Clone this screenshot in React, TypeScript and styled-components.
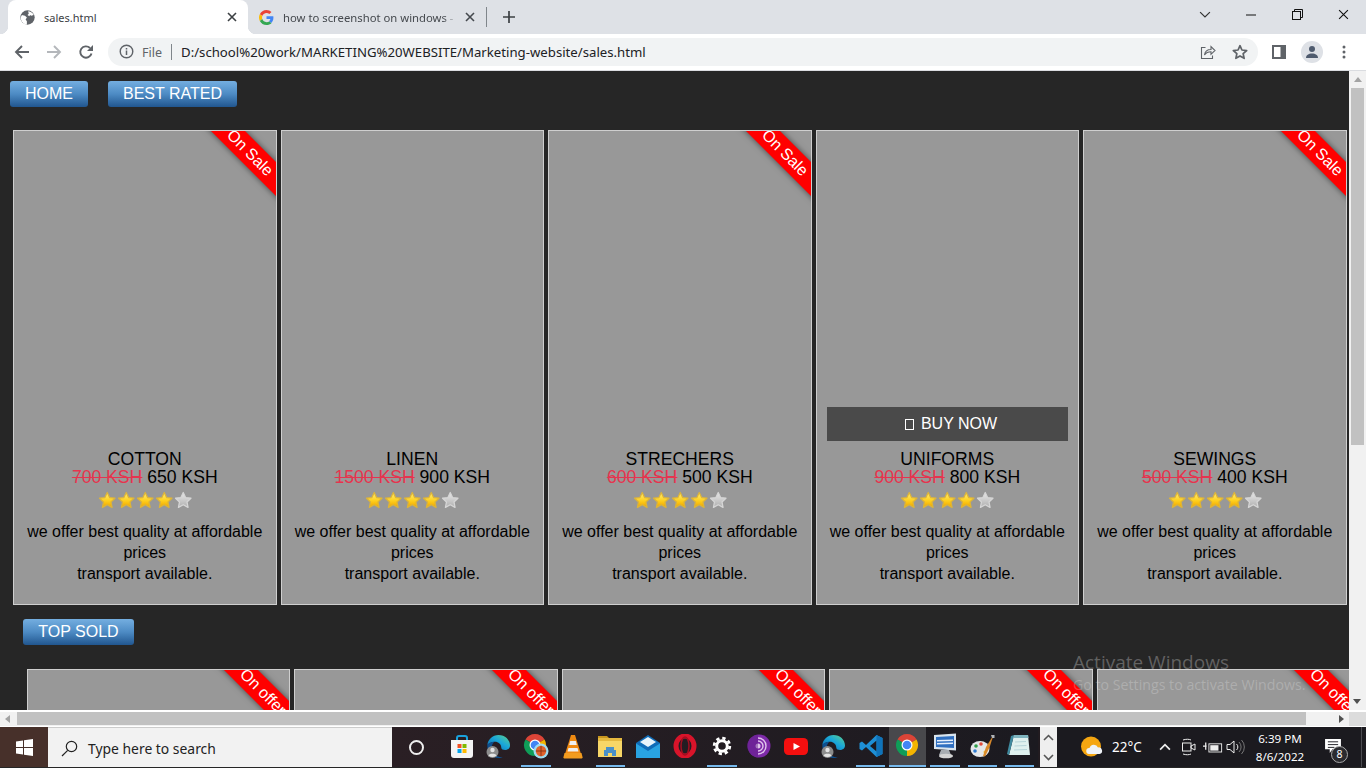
import React from "react";
import styled, { createGlobalStyle } from "styled-components";

const Global = createGlobalStyle`
  html, body { margin: 0; padding: 0; width: 1366px; height: 768px; overflow: hidden; background: #262626; }
  * { box-sizing: border-box; }
`;

const Screen = styled.div`
  width: 1366px; height: 768px; display: flex; flex-direction: column; overflow: hidden; position: relative;
  font-family: "Liberation Sans", Arial, sans-serif;
`;

/* browser chrome */
const UI = `"Noto Sans", "Open Sans", sans-serif`;
const TabStrip = styled.div`
  height: 34px; background: #dee1e6; display: flex; align-items: stretch; padding-left: 8px; flex: none;
`;
const ActiveTab = styled.div`
  position: relative; width: 240px; background: #fff; border-radius: 8px 8px 0 0; display: flex; align-items: center;
  padding: 0 11px 0 12px; font: 11px ${UI}; color: #3c4043;
  &::before, &::after { content: ""; position: absolute; bottom: 0; width: 8px; height: 8px; }
  &::before { left: -8px; background: radial-gradient(circle at 0 0, #dee1e6 8px, #fff 8.5px); }
  &::after { right: -8px; background: radial-gradient(circle at 100% 0, #dee1e6 8px, #fff 8.5px); }
`;
const TabTitle = styled.span`
  flex: 1; margin-left: 9px; white-space: nowrap; overflow: hidden;
`;
const GreyTab = styled.div`
  width: 238px; display: flex; align-items: center; padding: 0 9px 0 11px; font: 11.3px ${UI}; color: #45494e;
`;
const FadedTitle = styled.span`
  width: 174px; margin-left: 9px; margin-right: 8px; white-space: nowrap; overflow: hidden;
  mask-image: linear-gradient(90deg, #000 92%, transparent);
`;
const TabDivider = styled.div`
  width: 1px; height: 20px; background: #80868b; align-self: center;
`;
const NewTab = styled.div`
  width: 44px; display: flex; align-items: center; justify-content: center;
`;
const WindowControls = styled.div`
  margin-left: auto; display: flex; align-items: flex-start;
`;
const WinButton = styled.div`
  width: 46px; height: 29px; display: flex; align-items: center; justify-content: center;
`;
const Toolbar = styled.div`
  height: 37px; background: #fff; display: flex; align-items: center; flex: none; border-bottom: 1px solid #dadce0;
  padding: 0 0 1px 0;
`;
const NavIcon = styled.div`
  width: 32px; display: flex; justify-content: center; align-items: center;
`;
const NavGroup = styled.div`
  display: flex; margin-left: 6px; width: 102px;
`;
const Omnibox = styled.div`
  width: 1150px; height: 28px; border-radius: 14px; background: #f1f3f4; display: flex; align-items: center; padding: 0 2px 0 11px;
`;
const FileLabel = styled.span`
  font: 12.5px ${UI}; color: #5f6368; margin-left: 8px; padding-top: 1px;
`;
const OmniSep = styled.span`
  width: 1px; height: 16px; background: #80868b; margin: 0 9px;
`;
const Url = styled.span`
  font: 13.2px ${UI}; color: #202124; flex: 1; white-space: nowrap;
`;
const OmniAction = styled.div`
  width: 32px; display: flex; justify-content: center; align-items: center;
`;
const ToolRight = styled.div`
  display: flex; align-items: center; margin-left: 5px;
`;
const ToolBtn = styled.div`
  width: 32.5px; display: flex; justify-content: center; align-items: center;
`;
const Avatar = styled.div`
  width: 22px; height: 22px; border-radius: 50%; background: #dee1e6; display: flex; align-items: center; justify-content: center;
`;

/* page */
const Viewport = styled.div`
  flex: none; height: 641px; display: flex; border-bottom: 2px solid #fff;
`;
const Page = styled.div`
  flex: 1; min-width: 0; background: #262626; overflow: hidden; padding-top: 10px;
`;
const NavRow = styled.div`
  display: flex; gap: 20px; padding-left: 10px;
`;
const GlossButton = styled.div<{ $w: number }>`
  width: ${(p) => p.$w}px; height: 26px; border-radius: 3px; color: #fff; font-size: 16px; line-height: 25px; text-align: center;
  white-space: nowrap;
  background: linear-gradient(180deg, #74aee0 0%, #4d8bc4 50%, #21568f 100%);
`;
const SoldRow = styled.div`
  padding-left: 23px; margin-top: 14px;
`;
const CardRow = styled.div<{ $left: number; $top: number }>`
  display: flex; gap: 4px; padding-left: ${(p) => p.$left}px; margin-top: ${(p) => p.$top}px;
`;
const Card = styled.div`
  position: relative; flex: none; width: 263.5px; height: 475px; background: #989898; border: 1px solid #cfcfcf; overflow: hidden;
  text-align: center; color: #000; padding: 319px 8px 0;
`;
const Ribbon = styled.div`
  position: absolute; top: 10px; right: -39px; width: 130px; height: 24px; background: #f00; color: #fff; font-size: 16px; line-height: 24px;
  text-align: center; transform: rotate(45deg); box-shadow: 0 0 6px rgba(0,0,0,.55); white-space: nowrap;
`;
const BuyNow = styled.div`
  position: absolute; left: 10px; top: 276px; width: 241px; height: 34px; background: #4a4a4a; color: #fff; font-size: 16px; padding: 0 0 0 8px;
  display: flex; justify-content: center; align-items: center; gap: 7px;
`;
const MissingGlyph = styled.span`
  display: inline-block; width: 9px; height: 11px; border: 1px solid #fff;
`;
const Title = styled.div`
  font-size: 17.6px; line-height: 18px;
`;
const Price = styled.div`
  font-size: 17.6px; line-height: 18px; white-space: nowrap;
`;
const OldPrice = styled.s`
  color: #e6344e;
`;
const Stars = styled.div`
  display: flex; justify-content: center; gap: 0.5px; margin-top: 5px; height: 18px;
`;
const Desc = styled.p`
  margin: 12px 0 0; font-size: 16px; line-height: 21px;
`;
const Watermark = styled.div`
  position: absolute; left: 1073px; top: 650px; color: rgba(255,255,255,.28); font-family: "Open Sans", sans-serif; pointer-events: none;
`;
const WmTitle = styled.div`
  font-size: 19px; line-height: 24px;
`;
const WmSub = styled.div`
  font-size: 14.2px; line-height: 18px; margin-top: 2px; color: rgba(255,255,255,.22); white-space: nowrap;
`;

const VScroll = styled.div`
  width: 17px; flex: none; background: #f1f1f1; display: flex; flex-direction: column; align-items: center; padding-top: 6px; position: relative;
`;
const VThumb = styled.div`
  width: 13px; height: 357px; background: #c1c1c1; margin-top: 6px;
`;
const ArrowDown = styled.div`
  position: absolute; bottom: 6px; left: 4px; width: 0; height: 0; border-left: 4.5px solid transparent; border-right: 4.5px solid transparent; border-top: 5px solid #505050;
`;
const ArrowUp = styled.div`
  width: 0; height: 0; border-left: 4.5px solid transparent; border-right: 4.5px solid transparent; border-bottom: 5px solid #a3a3a3;
`;
const HScroll = styled.div`
  height: 15px; flex: none; display: flex; background: #f1f1f1; border-bottom: 1px solid #fff;
`;
const HTrack = styled.div`
  width: 1349px; display: flex; align-items: center; position: relative; padding-left: 17px;
`;
const HThumb = styled.div`
  width: 1289px; height: 13px; background: #c1c1c1; margin-top: -1px;
`;
const ArrowLeft = styled.div`
  position: absolute; left: 5px; top: 3px; width: 0; height: 0; border-top: 4.5px solid transparent; border-bottom: 4.5px solid transparent; border-right: 5px solid #a3a3a3;
`;
const ArrowRight = styled.div`
  position: absolute; right: 5px; top: 3px; width: 0; height: 0; border-top: 4.5px solid transparent; border-bottom: 4.5px solid transparent; border-left: 5px solid #505050;
`;
const HCorner = styled.div`
  flex: 1; background: #dcdcdc;
`;

/* taskbar */
const Taskbar = styled.div`
  height: 40px; flex: none; display: flex; background: #211b20; color: #fff; font-family: "Noto Sans", sans-serif;
`;
const StartBtn = styled.div`
  width: 48px; display: flex; align-items: center; justify-content: center; background: #47302a;
`;
const SearchBox = styled.div`
  width: 344px; background: #f2f2f2; color: #222; display: flex; align-items: center; padding: 1px 0 0 13px; gap: 10px; font-size: 13.9px; border-top: 1px solid #ccc;
`;
const Cortana = styled.div`
  width: 51px; display: flex; align-items: center; padding-left: 17px;
`;
const CortanaRing = styled.div`
  width: 15px; height: 15px; border-radius: 50%; border: 2.5px solid #eee;
`;
const Apps = styled.div`
  display: flex; background: linear-gradient(90deg, #2a1f24, #1b1a20);
`;
const AppCell = styled.div<{ $on?: boolean; $active?: boolean }>`
  position: relative; width: 37.2px; display: flex; align-items: center; justify-content: center; padding-bottom: 2px;
  background: ${(p) => (p.$active ? "#48484c" : "transparent")};
  &::after {
    content: ""; display: ${(p) => (p.$on ? "block" : "none")}; position: absolute; bottom: 0; height: 2px; background: #76b9ed;
    left: ${(p) => (p.$active ? 0 : "4px")}; right: ${(p) => (p.$active ? 0 : "4px")};
  }
`;
const TrayScroll = styled.div`
  width: 17px; margin-left: auto; background: #efefef; display: flex; flex-direction: column; align-items: center; justify-content: space-between; padding: 7px 0 6px;
`;
const Tray = styled.div`
  width: 309px; flex: none; display: flex; align-items: center; background: #1b1a1f; position: relative; padding-left: 24px;
`;
const Temp = styled.span`
  font-size: 13.5px; margin-left: 9px; width: 44px;
`;
const TrayIcon = styled.div<{ $w: number }>`
  width: ${(p) => p.$w}px; display: flex; justify-content: center;
  & > svg { flex: none; }
`;
const Clock = styled.div`
  width: 60px; text-align: center; font-size: 11.6px; line-height: 18px; padding-top: 1px;
`;
const Notice = styled.div`
  position: relative; margin-left: 13px; width: 20px; height: 17px; display: flex; justify-content: center; align-items: flex-start;
`;
const NoticeBadge = styled.div`
  position: absolute; left: 8px; top: 7px; width: 17px; height: 17px; border-radius: 50%; background: #2b2b2f; border: 1px solid #aaa; font-size: 10.5px;
  line-height: 15px; text-align: center;
`;
const EndLine = styled.div`
  position: absolute; right: 4px; top: 0; bottom: 0; width: 1px; background: #4b4b50;
`;

/* icons */
const Star = ({ on }: { on: boolean }) => (
  <svg width="18.5" height="18" viewBox="0 0 24 24">
    <defs>
      <linearGradient id="sOn" x1="0" y1="0" x2="0" y2="1"><stop offset="0" stopColor="#fff27a" /><stop offset=".55" stopColor="#ffcf1c" /><stop offset="1" stopColor="#eea400" /></linearGradient>
      <linearGradient id="sOff" x1="0" y1="0" x2="0" y2="1"><stop offset="0" stopColor="#eaeaea" /><stop offset="1" stopColor="#aeaeae" /></linearGradient>
    </defs>
    <path d="M12 2l3.100 6.700 7.200.9-5.300 5 1.400 7.300L12 18.300l-6.400 3.600L7 14.600l-5.300-5 7.200-.9z" fill={on ? "url(#sOn)" : "url(#sOff)"} stroke={on ? "#dcb43a" : "#d6d6d6"} strokeWidth="1.700" strokeLinejoin="round" />
  </svg>
);
const Close = ({ c = "#3c4043", s = 10 }: { c?: string; s?: number }) => (
  <svg width={s} height={s} viewBox="0 0 10 10"><path d="M1 1l8 8M9 1l-8 8" stroke={c} strokeWidth={s > 10 ? 1 : 1.6} /></svg>
);
const Globe = () => (
  <svg width="15" height="15" viewBox="0 0 24 24"><circle cx="12" cy="12" r="11.5" fill="#5f6368" /><path d="M3 8l5 1 3 3-2 3 2 3v5l-2 0C5 22 1 17 1 12zM13 2c3 0 7 2 9 6l-4 1-2-1-1 2-3-2 2-2z" fill="#fff" /></svg>
);
const GLogo = () => (
  <svg width="15" height="15" viewBox="0 0 48 48">
    <path fill="#EA4335" d="M24 9.5c3.5 0 6.6 1.2 9.1 3.6l6.8-6.8C35.8 2.5 30.3 0 24 0 14.6 0 6.5 5.4 2.6 13.2l7.9 6.1C12.4 13.7 17.7 9.5 24 9.5z" />
    <path fill="#4285F4" d="M46.100 24.500c0-1.600-.1-3.100-.4-4.500H24v9h12.400c-.5 2.900-2.200 5.300-4.600 7l7.200 5.600c4.200-3.900 7.100-9.600 7.100-17.100z" />
    <path fill="#FBBC05" d="M10.500 28.700c-.5-1.400-.8-3-.8-4.700s.3-3.300.8-4.700l-7.900-6.100C.9 16.500 0 20.100 0 24s.9 7.500 2.600 10.800z" />
    <path fill="#34A853" d="M24 48c6.500 0 11.900-2.100 15.900-5.800l-7.200-5.600c-2.200 1.500-5 2.300-8.700 2.300-6.300 0-11.600-4.200-13.500-9.900l-7.900 6.100C6.500 42.600 14.600 48 24 48z" />
  </svg>
);
const Arrow = ({ c, flip }: { c: string; flip?: boolean }) => (
  <svg width="16" height="16" viewBox="0 0 16 16" style={flip ? { transform: "scaleX(-1)" } : undefined}><path d="M15 8H2M8 2L2 8l6 6" fill="none" stroke={c} strokeWidth="1.9" /></svg>
);
const Reload = () => (
  <svg width="16" height="16" viewBox="0 0 16 16"><path d="M13.500 9.500A5.700 5.700 0 1 1 12 4" fill="none" stroke="#5f6368" strokeWidth="1.9" /><path d="M15 1v6H9z" fill="#5f6368" /></svg>
);
const Info = () => (
  <svg width="15" height="15" viewBox="0 0 16 16"><circle cx="8" cy="8" r="6.700" fill="none" stroke="#5f6368" strokeWidth="1.500" /><path d="M7.200 7h1.600v4.800H7.200zM7.200 4.200h1.600v1.600H7.200z" fill="#5f6368" /></svg>
);
const Share = () => (
  <svg width="16" height="16" viewBox="0 0 16 16" fill="none" stroke="#5f6368" strokeWidth="1.100"><path d="M5.500 3.500H1.500v11h11v-3" /><path d="M4.500 11c.5-3.500 3-5.500 6.500-5.500V2.500l4 4-4 3.800V7.800c-3 0-5 1-6.500 3.200z" /></svg>
);
const StarOutline = () => (
  <svg width="16" height="16" viewBox="0 0 24 24"><path d="M12 2.500l2.900 6.500 7.100.8-5.300 4.700 1.500 7-6.200-3.600-6.200 3.600 1.500-7L2 9.800 9.100 9z" fill="none" stroke="#5f6368" strokeWidth="2.600" strokeLinejoin="round" /></svg>
);
const Panel = () => (
  <svg width="14" height="14" viewBox="0 0 14 14"><path d="M0 0h14v14H0zM2 2v10h6.500V2z" fill="#5f6368" fillRule="evenodd" /></svg>
);
const Person = () => (
  <svg width="14" height="14" viewBox="0 0 14 14"><circle cx="7" cy="4" r="3" fill="#4f5b6e" /><path d="M1 13c0-3 2.500-4.500 6-4.500s6 1.500 6 4.500z" fill="#4f5b6e" /></svg>
);
const Dots = () => (
  <svg width="4" height="14" viewBox="0 0 4 14"><circle cx="2" cy="2" r="1.500" fill="#5f6368" /><circle cx="2" cy="7" r="1.500" fill="#5f6368" /><circle cx="2" cy="12" r="1.500" fill="#5f6368" /></svg>
);
const Plus = () => (
  <svg width="12" height="12" viewBox="0 0 12 12"><path d="M6 0v12M0 6h12" stroke="#3c4043" strokeWidth="1.700" /></svg>
);
const WinLogo = () => (
  <svg width="17" height="17" viewBox="0 0 17 17" fill="#fff"><path d="M0 2.400L7 1.400v6.600H0zM8 1.200L17 0v8H8zM0 9h7v6.600L0 14.600zM8 9h9v8l-9-1.200z" /></svg>
);
const Magnifier = () => (
  <svg width="17" height="17" viewBox="0 0 17 17" fill="none" stroke="#222" strokeWidth="1.200"><circle cx="10.500" cy="6.500" r="5.200" /><path d="M6.700 10.300L1 16" /></svg>
);
const Store = () => (
  <svg width="24" height="25" viewBox="0 0 24 25">
    <path d="M7 7V4a2 2 0 0 1 2-2h6a2 2 0 0 1 2 2v3" fill="none" stroke="#1aa2dd" strokeWidth="2" />
    <path d="M1 6h22v15a3 3 0 0 1-3 3H4a3 3 0 0 1-3-3z" fill="#f4f4f4" />
    <path d="M7.500 10h4v4h-4z" fill="#f25022" /><path d="M12.500 10h4v4h-4z" fill="#7fba00" /><path d="M7.500 15h4v4h-4z" fill="#00a4ef" /><path d="M12.500 15h4v4h-4z" fill="#ffb900" />
  </svg>
);
const Edge = () => (
  <svg width="25" height="25" viewBox="0 0 25 25">
    <defs><linearGradient id="edgeG" x1="0" y1="1" x2="1" y2="0"><stop offset="0" stopColor="#0a5fa8" /><stop offset=".55" stopColor="#1aa7d9" /><stop offset="1" stopColor="#5fd38a" /></linearGradient></defs>
    <path d="M12.500 1C19 1 24 5.700 24 11.500c0 3-2.500 4.500-5 4.500-2 0-3.700-.7-3.700-2.200 0-3.500-3-6-6.300-6C5 7.800 2.500 10 1.300 11 2 5.500 6.500 1 12.500 1z" fill="url(#edgeG)" />
    <path d="M1.300 11C2.500 9.500 5 7.800 8.500 7.800 6 10 5 12.500 6.500 17c1.400 4 5.500 6.800 11 5.800C15.500 23.700 14 24 12.500 24 6 24 1 18.500 1.300 11z" fill="#0d4f8f" />
    <circle cx="6.500" cy="18" r="6" fill="#8c8c8c" /><circle cx="6.500" cy="16" r="2.200" fill="#e4e4e4" /><path d="M2.500 21.500c.5-2.500 7.500-2.500 8 0a6 6 0 0 1-8 0z" fill="#e4e4e4" />
  </svg>
);
const Chrome = ({ badge }: { badge?: boolean }) => (
  <svg width="26" height="26" viewBox="0 0 26 26">
    <path d="M12 12L2.470 6.500A11 11 0 0 1 21.530 6.500z" fill="#db4437" /><path d="M12 12L21.530 6.500A11 11 0 0 1 12 23z" fill="#f4b400" /><path d="M12 12L12 23A11 11 0 0 1 2.470 6.500z" fill="#0f9d58" />
    <circle cx="12" cy="12" r="5.500" fill="#fff" /><circle cx="12" cy="12" r="4.300" fill="#4285f4" />
    {badge && (<g><circle cx="18" cy="18" r="7.500" fill="#9fdcef" /><circle cx="18" cy="18" r="5.200" fill="#e2632b" /><path d="M18 12.800v10.400M12.800 18h10.400" stroke="#7c2f10" strokeWidth=".8" /></g>)}
  </svg>
);
const Vlc = () => (
  <svg width="20" height="25" viewBox="0 0 20 25">
    <path d="M8 1h4l6 19H2z" fill="#f08a12" /><path d="M7.200 7h5.600l1 4H6.200zM5.500 14h9l1 3.500h-11z" fill="#efefef" /><path d="M1.500 19h17l1 4a1 1 0 0 1-1 1.500H1.500a1 1 0 0 1-1-1.500z" fill="#f39c1f" />
  </svg>
);
const Folder = () => (
  <svg width="24" height="22" viewBox="0 0 24 22">
    <path d="M0 1h9l2 2h-11z" fill="#c8961f" /><path d="M0 3h24v19H0z" fill="#f7d667" /><path d="M0 3h24v3H0z" fill="#e5b93f" /><path d="M6 21v-6h2v-3h8v3h2v6h-4v-3h-4v3z" fill="#4a90c8" />
  </svg>
);
const Mail = () => (
  <svg width="24" height="23" viewBox="0 0 24 23">
    <path d="M12 0l12 8v15H0V8z" fill="#0f6cb8" /><path d="M0 8.500L12 16l12-7.500V23H0z" fill="#29a3e2" /><path d="M4 7l8-5 8 5-8 5z" fill="#e8f4fb" />
  </svg>
);
const Opera = () => (
  <svg width="24" height="24" viewBox="0 0 24 24"><ellipse cx="12" cy="12" rx="9" ry="10" fill="none" stroke="#d8142a" strokeWidth="5" /><ellipse cx="12" cy="12" rx="4" ry="9" fill="none" stroke="#a50d20" strokeWidth="1.500" /></svg>
);
const Gear = () => (
  <svg width="20" height="20" viewBox="0 0 20 20"><circle cx="10" cy="10" r="5.300" fill="none" stroke="#fff" strokeWidth="3" /><circle cx="10" cy="10" r="7.800" fill="none" stroke="#fff" strokeWidth="2.800" strokeDasharray="3.300 2.830" /></svg>
);
const Tor = () => (
  <svg width="24" height="24" viewBox="0 0 24 24">
    <circle cx="12" cy="12" r="11.500" fill="#7d2aa8" /><path d="M11 4a8 8 0 0 1 0 16M11 7a5 5 0 0 1 0 10" fill="none" stroke="#e0c5ec" strokeWidth="1.400" /><circle cx="11" cy="12" r="2.500" fill="#e0c5ec" /><path d="M0 12a12 12 0 0 0 11 11.500V.5A12 12 0 0 0 0 12z" fill="#5d1a85" opacity=".45" />
  </svg>
);
const YouTube = () => (
  <svg width="24" height="17" viewBox="0 0 24 17"><rect width="24" height="17" rx="4.500" fill="#f40f0f" /><path d="M9.500 5l6.500 3.500L9.500 12z" fill="#fff" /></svg>
);
const VsCode = () => (
  <svg width="24" height="24" viewBox="0 0 24 24">
    <path d="M17.500 1L23.500 4v16l-6 3L7 13l-4 3.500-2.500-1.500V9L3 7.500l4 3.500z" fill="#1e8fd5" /><path d="M17.500 6.500L11 12l6.500 5.500z" fill="#1b1a20" /><path d="M17.500 1l6 3v16l-6 3z" fill="#0f73ba" />
  </svg>
);
const MonitorApp = () => (
  <svg width="24" height="26" viewBox="0 0 24 26">
    <path d="M1 2l22-1.500v17L1 16z" fill="#d9e4ee" /><path d="M3 4l18-1v12L3 14z" fill="#2f6fc1" /><path d="M4 7l16-.5v1.500l-16 .5zM4 10l16-.5v1.500l-16 .5z" fill="#e5eefb" /><path d="M8 17h8l2 5H6z" fill="#a8adb2" /><ellipse cx="13" cy="23" rx="7" ry="2.300" fill="#d4d4d4" />
  </svg>
);
const Paint = () => (
  <svg width="25" height="25" viewBox="0 0 25 25">
    <ellipse cx="10" cy="15" rx="9.500" ry="8" fill="#e5e8ea" /><circle cx="6" cy="12" r="1.800" fill="#2fa04b" /><circle cx="11" cy="10" r="1.800" fill="#e24b3b" /><circle cx="5" cy="17" r="1.800" fill="#2f7bd0" /><circle cx="15" cy="18" r="1.500" fill="#f1c232" />
    <path d="M23.500 1L16 13l-3 9 2 .5 4.500-9z" fill="#d98a2b" /><path d="M21 1h3.500v3H22z" fill="#b2b5b8" />
  </svg>
);
const Notepad = () => (
  <svg width="24" height="25" viewBox="0 0 24 25">
    <path d="M7 1h14l2 20H2z" fill="#dff1ef" /><path d="M2 21L7 1 4 2 0 20z" fill="#3f8ba0" /><path d="M7 1h14l.5 3H6.200z" fill="#7fb5bf" /><path d="M8 8l11-.5M7.500 12l12-.5M7 16l13-.5" stroke="#a9cdd3" strokeWidth=".8" />
  </svg>
);
const Chevron = ({ up, c = "#444", w = 11, sw = 1.6 }: { up?: boolean; c?: string; w?: number; sw?: number }) => (
  <svg width={w} height={w * 0.64} viewBox="0 0 11 7"><path d={up ? "M1 6l4.500-4.500L10 6" : "M1 1l4.500 4.500L10 1"} fill="none" stroke={c} strokeWidth={sw} /></svg>
);
const Weather = () => (
  <svg width="22" height="22" viewBox="0 0 22 22"><circle cx="10" cy="10.500" r="10" fill="#f5a611" /><path d="M8 18a3 3 0 0 1 .5-6 4.500 4.500 0 0 1 8.500-.5 3.300 3.300 0 0 1 1.500 6.500z" fill="#eef2f6" /></svg>
);
const Camera = () => (
  <svg width="14" height="18" viewBox="0 0 14 18" fill="none" stroke="#eee" strokeWidth="1"><path d="M1 2c3-1 6-1 8 0M1 16c3 1 6 1 8 0" /><rect x=".5" y="5" width="8.500" height="8" /><path d="M9 8l4-2v6l-4-2z" /></svg>
);
const Power = () => (
  <svg width="20" height="14" viewBox="0 0 22 14" fill="none" stroke="#eee"><rect x="6.500" y="3.500" width="14" height="9" /><path d="M8 5h9v6H8z" fill="#eee" stroke="none" /><path d="M0 6h4M3 2v8" strokeWidth="1.400" /></svg>
);
const Speaker = () => (
  <svg width="20" height="16" viewBox="0 0 20 16" fill="none" stroke="#eee"><path d="M1 5.500h3L8 2v12L4 10.500H1z" /><path d="M10.500 5a4 4 0 0 1 0 6" /><path d="M13 3a7 7 0 0 1 0 10M15.500 1a10 10 0 0 1 0 14" stroke="#777" /></svg>
);
const NoticeIcon = () => (
  <svg width="16" height="14" viewBox="0 0 17 15"><path d="M0 0h17v11H8l-3 4v-4H0z" fill="#fff" /><path d="M3 3h11M3 6h11M3 9h7" stroke="#1b1a1f" /></svg>
);

const products = [
  { name: "COTTON", was: "700 KSH", now: "650 KSH", sale: true },
  { name: "LINEN", was: "1500 KSH", now: "900 KSH" },
  { name: "STRECHERS", was: "600 KSH", now: "500 KSH", sale: true },
  { name: "UNIFORMS", was: "900 KSH", now: "800 KSH", hover: true },
  { name: "SEWINGS", was: "500 KSH", now: "400 KSH", sale: true },
];

const apps: { icon: React.ReactNode; on?: boolean; active?: boolean }[] = [
  { icon: <Store /> },
  { icon: <Edge /> },
  { icon: <Chrome badge />, on: true },
  { icon: <Vlc /> },
  { icon: <Folder />, on: true },
  { icon: <Mail /> },
  { icon: <Opera /> },
  { icon: <Gear />, on: true },
  { icon: <Tor /> },
  { icon: <YouTube /> },
  { icon: <Edge /> },
  { icon: <VsCode />, on: true },
  { icon: <Chrome />, on: true, active: true },
  { icon: <MonitorApp />, on: true },
  { icon: <Paint />, on: true },
  { icon: <Notepad />, on: true },
];

export default function App() {
  return (
    <Screen>
      <Global />
      <TabStrip>
        <ActiveTab>
          <Globe />
          <TabTitle>sales.html</TabTitle>
          <Close />
        </ActiveTab>
        <GreyTab>
          <GLogo />
          <FadedTitle>how to screenshot on windows - Google Search</FadedTitle>
          <Close c="#45494e" />
        </GreyTab>
        <TabDivider />
        <NewTab><Plus /></NewTab>
        <WindowControls>
          <WinButton><Chevron c="#333" w={12} sw={1.1} /></WinButton>
          <WinButton><svg width="10" height="2" viewBox="0 0 10 2"><path d="M0 1h10" stroke="#111" /></svg></WinButton>
          <WinButton><svg width="11" height="11" viewBox="0 0 11 11" fill="none" stroke="#111"><rect x=".5" y="2.500" width="8" height="8" /><path d="M2.500 2.500v-2h8v8h-2" /></svg></WinButton>
          <WinButton><Close c="#111" s={11} /></WinButton>
        </WindowControls>
      </TabStrip>
      <Toolbar>
        <NavGroup>
          <NavIcon><Arrow c="#5f6368" /></NavIcon>
          <NavIcon><Arrow c="#b4b7bb" flip /></NavIcon>
          <NavIcon><Reload /></NavIcon>
        </NavGroup>
        <Omnibox>
          <Info />
          <FileLabel>File</FileLabel>
          <OmniSep />
          <Url>D:/school%20work/MARKETING%20WEBSITE/Marketing-website/sales.html</Url>
          <OmniAction><Share /></OmniAction>
          <OmniAction><StarOutline /></OmniAction>
        </Omnibox>
        <ToolRight>
          <ToolBtn><Panel /></ToolBtn>
          <ToolBtn><Avatar><Person /></Avatar></ToolBtn>
          <ToolBtn><Dots /></ToolBtn>
        </ToolRight>
      </Toolbar>
      <Viewport>
        <Page>
          <NavRow>
            <GlossButton $w={78}>HOME</GlossButton>
            <GlossButton $w={129}>BEST RATED</GlossButton>
          </NavRow>
          <CardRow $left={13} $top={23}>
            {products.map((p) => (
              <Card key={p.name}>
                {p.sale && <Ribbon>On Sale</Ribbon>}
                {p.hover && <BuyNow><MissingGlyph />BUY NOW</BuyNow>}
                <Title>{p.name}</Title>
                <Price><OldPrice>{p.was}</OldPrice> {p.now}</Price>
                <Stars>
                  {[0, 1, 2, 3, 4].map((i) => <Star key={i} on={i < 4} />)}
                </Stars>
                <Desc>we offer best quality at affordable prices<br />transport available.</Desc>
              </Card>
            ))}
          </CardRow>
          <SoldRow><GlossButton $w={111}>TOP SOLD</GlossButton></SoldRow>
          <CardRow $left={26.75} $top={24}>
            {products.map((p) => (
              <Card key={p.name}><Ribbon>On offer</Ribbon></Card>
            ))}
          </CardRow>
        </Page>
        <VScroll>
          <ArrowUp />
          <VThumb />
          <ArrowDown />
        </VScroll>
      </Viewport>
      <HScroll>
        <HTrack>
          <ArrowLeft />
          <HThumb />
          <ArrowRight />
        </HTrack>
        <HCorner />
      </HScroll>
      <Taskbar>
        <StartBtn><WinLogo /></StartBtn>
        <SearchBox><Magnifier />Type here to search</SearchBox>
        <Apps>
          <Cortana><CortanaRing /></Cortana>
          {apps.map((a, i) => <AppCell key={i} $on={a.on} $active={a.active}>{a.icon}</AppCell>)}
        </Apps>
        <TrayScroll><Chevron up c="#555" /><Chevron c="#555" /></TrayScroll>
        <Tray>
          <Weather />
          <Temp>22°C</Temp>
          <TrayIcon $w={18}><Chevron up c="#eee" w={12} /></TrayIcon>
          <TrayIcon $w={30}><Camera /></TrayIcon>
          <TrayIcon $w={18}><Power /></TrayIcon>
          <TrayIcon $w={28}><Speaker /></TrayIcon>
          <Clock>6:39 PM<br />8/6/2022</Clock>
          <Notice><NoticeIcon /><NoticeBadge>8</NoticeBadge></Notice>
          <EndLine />
        </Tray>
      </Taskbar>
      <Watermark>
        <WmTitle>Activate Windows</WmTitle>
        <WmSub>Go to Settings to activate Windows.</WmSub>
      </Watermark>
    </Screen>
  );
}
